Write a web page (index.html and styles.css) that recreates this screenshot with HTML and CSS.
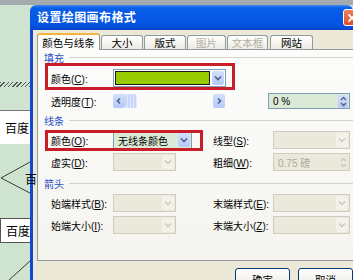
FILE: index.html
```html
<!DOCTYPE html>
<html>
<head>
<meta charset="utf-8">
<link rel="stylesheet" href="styles.css">
</head>
<body>
<div class="strip"></div>
<div class="main">
  <div class="canvas">
    <div class="hatch"></div>
    <div class="node node1">百度</div>
    <svg class="lines" width="30" height="275" viewBox="0 0 30 275">
      <polyline points="30,157 1,173 30,188" fill="none" stroke="#3a3a3a" stroke-width="1"/>
      <line x1="8" y1="276" x2="30" y2="256" stroke="#3a3a3a" stroke-width="1"/>
    </svg>
    <div class="dtext">百</div>
    <div class="node node2">百度</div>
  </div>
  <div class="dialog">
    <div class="titlebar">
      <span class="title">设置绘图画布格式</span>
      <span class="close"><svg width="18" height="17" viewBox="0 0 18 17"><path d="M5 4 L13 12 M13 4 L5 12" stroke="#fff" stroke-width="2"/></svg></span>
    </div>
    <div class="frame">
      <div class="tabs">
        <div class="tab active w1">颜色与线条</div>
        <div class="tab w2">大小</div>
        <div class="tab w3">版式</div>
        <div class="tab off w4">图片</div>
        <div class="tab off w5">文本框</div>
        <div class="tab w6">网站</div>
      </div>
      <div class="pane">
        <div class="group g1"><span>填充</span></div>
        <div class="row r1">
          <span class="lbl">颜色(<u>C</u>):</span>
          <div class="combo colorcombo"><span class="swatch"></span><span class="dd"><svg width="12" height="12" viewBox="0 0 12 12"><path d="M3 4.5 L6 7.5 L9 4.5" fill="none" stroke="#4d6185" stroke-width="1.6"/></svg></span></div>
        </div>
        <div class="row r2">
          <span class="lbl">透明度(<u>T</u>):</span>
          <div class="scroll">
            <span class="sbtn"><svg width="12" height="12" viewBox="0 0 12 12"><path d="M7 3.5 L4.5 6 L7 8.5" fill="none" stroke="#4d6185" stroke-width="1.6"/></svg></span>
            <span class="thumb"></span>
            <span class="track"></span>
            <span class="sbtn"><svg width="12" height="12" viewBox="0 0 12 12"><path d="M5 3.5 L7.5 6 L5 8.5" fill="none" stroke="#4d6185" stroke-width="1.6"/></svg></span>
          </div>
          <span></span>
          <div class="spin green"><span class="val">0 %</span><span class="spb"><svg width="9" height="13" viewBox="0 0 9 13"><path d="M2 5 L4.5 2.5 L7 5 M2 8 L4.5 10.5 L7 8" fill="none" stroke="#4d6185" stroke-width="1.3"/></svg></span></div>
        </div>
        <div class="group g2"><span>线条</span></div>
        <div class="row r3">
          <span class="lbl">颜色(<u>O</u>):</span>
          <div class="combo green c79"><span class="val">无线条颜色</span><span class="dd"><svg width="12" height="12" viewBox="0 0 12 12"><path d="M3 4.5 L6 7.5 L9 4.5" fill="none" stroke="#4d6185" stroke-width="1.6"/></svg></span></div>
          <span class="lbl">线型(<u>S</u>):</span>
          <div class="combo dis c77"><span class="val"></span><span class="dd"><svg width="12" height="12" viewBox="0 0 12 12"><path d="M3 4.5 L6 7.5 L9 4.5" fill="none" stroke="#c9c7ba" stroke-width="1.4"/></svg></span></div>
        </div>
        <div class="row r4">
          <span class="lbl">虚实(<u>D</u>):</span>
          <div class="combo dis c63"><span class="val"></span><span class="dd"><svg width="12" height="12" viewBox="0 0 12 12"><path d="M3 4.5 L6 7.5 L9 4.5" fill="none" stroke="#c9c7ba" stroke-width="1.4"/></svg></span></div>
          <span class="lbl">粗细(<u>W</u>):</span>
          <div class="spin dis c77"><span class="val">0.75 磅</span><span class="spb"><svg width="9" height="13" viewBox="0 0 9 13"><path d="M2 5 L4.5 2.5 L7 5 M2 8 L4.5 10.5 L7 8" fill="none" stroke="#c9c7ba" stroke-width="1.3"/></svg></span></div>
        </div>
        <div class="group g3"><span>箭头</span></div>
        <div class="row r5">
          <span class="lbl">始端样式(<u>B</u>):</span>
          <div class="combo dis c63"><span class="val"></span><span class="dd"><svg width="12" height="12" viewBox="0 0 12 12"><path d="M3 4.5 L6 7.5 L9 4.5" fill="none" stroke="#c9c7ba" stroke-width="1.4"/></svg></span></div>
          <span class="lbl">末端样式(<u>E</u>):</span>
          <div class="combo dis c77"><span class="val"></span><span class="dd"><svg width="12" height="12" viewBox="0 0 12 12"><path d="M3 4.5 L6 7.5 L9 4.5" fill="none" stroke="#c9c7ba" stroke-width="1.4"/></svg></span></div>
        </div>
        <div class="row r6">
          <span class="lbl">始端大小(<u>I</u>):</span>
          <div class="combo dis c63"><span class="val"></span><span class="dd"><svg width="12" height="12" viewBox="0 0 12 12"><path d="M3 4.5 L6 7.5 L9 4.5" fill="none" stroke="#c9c7ba" stroke-width="1.4"/></svg></span></div>
          <span class="lbl">末端大小(<u>Z</u>):</span>
          <div class="combo dis c77"><span class="val"></span><span class="dd"><svg width="12" height="12" viewBox="0 0 12 12"><path d="M3 4.5 L6 7.5 L9 4.5" fill="none" stroke="#c9c7ba" stroke-width="1.4"/></svg></span></div>
        </div>
        <div class="redbox rb1"></div>
        <div class="redbox rb2"></div>
      </div>
      <div class="buttons">
        <button class="btn">确定</button>
        <button class="btn">取消</button>
      </div>
    </div>
  </div>
</div>
</body>
</html>
```
FILE: styles.css
```css
* { box-sizing: border-box; margin: 0; padding: 0; }
html, body { width: 353px; height: 280px; overflow: hidden; }
body {
  background: #cfe3d1;
  font-family: "Liberation Sans", "Noto Sans CJK SC", sans-serif;
  font-size: 10px;
  color: #000;
}
.strip { height: 5px; background: #a4aaad; }
.main { display: flex; height: 275px; }

/* diagram fragment on the left */
.canvas { width: 30px; flex: none; position: relative; }
.hatch {
  position: absolute; left: 0; top: 77px; width: 30px; height: 5px;
  background: repeating-linear-gradient(-45deg, #555 0 1px, transparent 1px 3px);
}
.node {
  position: absolute; left: 0; width: 30px; background: #fff;
  font-size: 12px; padding-left: 5px; white-space: nowrap; overflow: hidden;
  display: flex; align-items: center;
}
.node1 { top: 105px; height: 34px; border-top: 1px solid #777; }
.node2 { top: 213px; height: 25px; border: 1px solid #555; border-right: none; }
.lines { position: absolute; left: 0; top: 0; }
.dtext { position: absolute; left: 25px; top: 165px; font-size: 12px; }

/* dialog */
.dialog { flex: 1; min-width: 0; display: flex; flex-direction: column; }
.titlebar {
  height: 25px; flex: none; position: relative;
  display: flex; align-items: center; padding: 0 0 2px 7px;
  border-radius: 6px 6px 0 0;
  background: linear-gradient(to bottom, #3d8cf6 0, #0b5ee8 3px, #0558e6 55%, #0452e0 85%, #0744c2 100%);
}
.title { color: #fff; font-weight: bold; font-size: 12px; letter-spacing: 0.4px; }
.close {
  position: absolute; left: 313px; top: 4px; width: 18px; height: 17px;
  border: 1px solid #fff; border-radius: 3px;
  background: linear-gradient(#ec7e5c, #d9512a);
  display: flex;
}
.frame {
  flex: 1; background: #ece9d8; border-left: 3px solid #1048d0;
  padding-left: 4px; overflow: hidden;
}

/* tabs */
.tabs { height: 19px; display: flex; align-items: flex-end; }
.tab {
  height: 14px; margin-right: 1px;
  border: 1px solid #919b9c; border-bottom: none; border-radius: 3px 3px 0 0;
  background: linear-gradient(#ffffff, #ecebe5);
  font-size: 10.5px; display: flex; align-items: center; justify-content: center;
}
.tab.active {
  height: 17px; margin-bottom: -1px; position: relative; z-index: 1;
  border-top: 2px solid #f5b43c; background: #fcfcfb;
}
.tab.off { color: #b3b0a2; }
.w1 { width: 63px; }
.w2 { width: 42px; }
.w3 { width: 42px; }
.w4 { width: 39px; }
.w5 { width: 41px; }
.w6 { width: 43px; margin-left: 1px; }

/* pane */
.pane {
  position: relative; width: 330px; height: 212px;
  border: 1px solid #919b9c; border-right: none;
  background: linear-gradient(#fcfcfb, #f5f4ef);
}
.group {
  height: 14px; padding-left: 6px; display: flex; align-items: center; gap: 5px;
  color: #1f4fc8;
}
.group::after { content: ""; flex: 1; height: 1px; background: #d5d3c6; }
.g1 { margin-top: 0; }
.g2 { margin-top: 4px; }
.g3 { margin-top: 4px; }
.row {
  display: grid; grid-template-columns: 62px 100px 60px 77px;
  align-items: center; padding-left: 13px; height: 20px;
}
.r1 { margin-top: 4px; }
.r2 { margin-top: 5px; height: 16px; }
.r3 { margin-top: 3px; }
.r4 { margin-top: 2px; }
.r5 { margin-top: 3px; }
.r6 { margin-top: 2px; }
.lbl { white-space: nowrap; }

.combo, .spin {
  height: 18px; border: 1px solid #7f9db9; background: #fff;
  display: flex; align-items: center;
}
.combo .val, .spin .val { flex: 1; padding-left: 4px; white-space: nowrap; }
.dd {
  width: 12px; height: 14px; margin-right: 1px; border-radius: 2px;
  background: linear-gradient(#d2defc, #b5c9f7);
  display: flex; align-items: center; justify-content: center;
}
.dis { border-color: #cfcdc0; background: #ebe9db; color: #aca899; }
.dis .dd { background: #f3f2ea; }
.green { background: #dbead7; }
.colorcombo { width: 113px; }
.swatch { flex: 1; height: 14px; margin: 0 2px 0 1px; border: 1px solid #1a1a1a; background: #99cc00; }
.c79 { width: 79px; }
.c77 { width: 77px; }
.c63 { width: 63px; }

.scroll { width: 112px; height: 14px; display: flex; align-items: center; }
.sbtn {
  width: 12px; height: 14px; border-radius: 2px;
  background: linear-gradient(#d2defc, #b5c9f7);
  display: flex; align-items: center; justify-content: center;
}
.thumb {
  width: 12px; height: 14px; border-radius: 2px;
  background: repeating-linear-gradient(90deg, #c9d6fa 0 2px, #e2e9fd 2px 3px);
}
.track { flex: 1; }
.r2 .spin { width: 82px; margin-left: -5px; height: 16px; }
.spb { width: 10px; height: 14px; display: flex; align-items: center; justify-content: center; margin-right: 1px; }
.r2 .spb { background: linear-gradient(#d2defc, #b5c9f7); border-radius: 2px; height: 13px; }

.redbox { position: absolute; border: 3px solid #c91d28; }
.rb1 { left: 7px; top: 13px; width: 190px; height: 27px; }
.rb2 { left: 7px; top: 80px; width: 158px; height: 21px; }

.buttons { display: flex; gap: 8px; padding-left: 198px; margin-top: 7px; }
.btn {
  width: 55px; height: 22px; flex: none;
  border: 1px solid #003c74; border-radius: 3px;
  background: linear-gradient(#ffffff, #f0efe8 70%, #d6d0c5);
  font-family: "Liberation Sans", "Noto Sans CJK SC", sans-serif;
  font-size: 10.5px; color: #000;
}
```
